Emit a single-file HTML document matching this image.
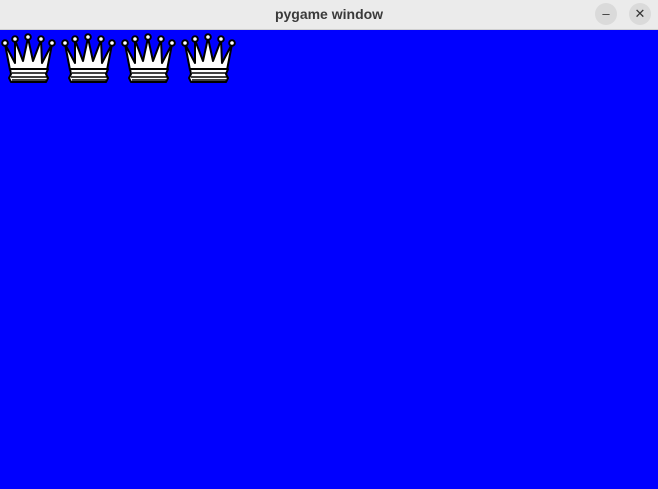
<!DOCTYPE html>
<html><head><style>
html,body{margin:0;padding:0;width:658px;height:489px;overflow:hidden;background:#00f;font-family:"Liberation Sans",sans-serif}
.bar{position:absolute;left:0;top:0;width:658px;height:29px;background:#ebebeb;border-bottom:1px solid #d0d0d0}
.t{position:absolute;left:0;width:658px;top:6px;text-align:center;font-weight:bold;font-size:14px;color:#3a3a3a}
.b{position:absolute;top:3px;width:22px;height:22px;border-radius:50%;background:#dadada;color:#333;text-align:center;font-size:13px;line-height:22px}
svg{position:absolute;left:0;top:30px}
</style></head><body>
<div class="bar"><div class="t">pygame window</div>
<div class="b" style="left:595px">–</div><div class="b" style="left:629px">✕</div></div>
<svg width="658" height="60">
<defs><g id="q" stroke="#000" stroke-width="2" fill="#fff" stroke-linejoin="round">
<polygon points="10,40 5,14 15,33 15,10 23,31 28,8 33,31 41,10 42,33 52,14 47,40"/>
<path d="M10,39 L48,39 L46,44 L48,48 L46,52 L11,52 L9,48 L11,44 Z"/>
<path d="M12,43 H46 M11,47 H47 M12,50 H46" stroke-width="1.5"/>
<circle cx="5" cy="13" r="2.8"/><circle cx="15" cy="9" r="2.8"/><circle cx="28" cy="7" r="2.8"/><circle cx="41" cy="9" r="2.8"/><circle cx="52" cy="13" r="2.8"/>
</g></defs>
<use href="#q" x="0"/><use href="#q" x="60"/><use href="#q" x="120"/><use href="#q" x="180"/>
</svg>
</body></html>
